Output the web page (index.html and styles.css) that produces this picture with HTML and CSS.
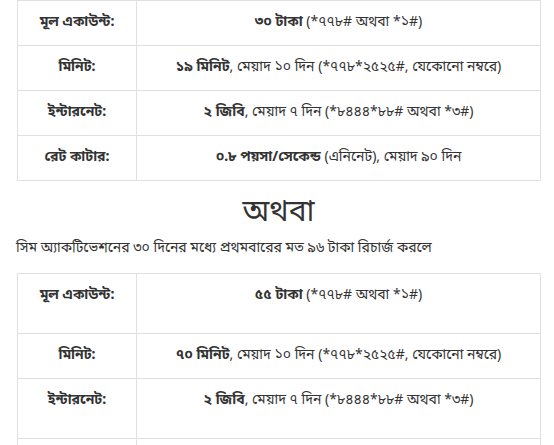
FILE: index.html
```html
<!DOCTYPE html>
<html lang="bn">
<head>
<meta charset="utf-8">
<link rel="stylesheet" href="styles.css">
</head>
<body>
<div class="page">
  <table class="plan">
    <tr>
      <th class="label">মূল একাউন্ট:</th>
      <td class="value"><b>৩০ টাকা</b> (*৭৭৮# অথবা *১#)</td>
    </tr>
    <tr>
      <th class="label">মিনিট:</th>
      <td class="value"><b>১৯ মিনিট</b>, মেয়াদ ১০ দিন (*৭৭৮*২৫২৫#, যেকোনো নম্বরে)</td>
    </tr>
    <tr>
      <th class="label">ইন্টারনেট:</th>
      <td class="value"><b>২ জিবি</b>, মেয়াদ ৭ দিন (*৮৪৪৪*৮৮# অথবা *৩#)</td>
    </tr>
    <tr>
      <th class="label">রেট কাটার:</th>
      <td class="value"><b>০.৮ পয়সা/সেকেন্ড</b> (এনিনেট), মেয়াদ ৯০ দিন</td>
    </tr>
  </table>

  <h2 class="or">অথবা</h2>
  <p class="note">সিম অ্যাকটিভেশনের ৩০ দিনের মধ্যে প্রথমবারের মত ৯৬ টাকা রিচার্জ করলে</p>

  <table class="plan">
    <tr class="tall">
      <th class="label">মূল একাউন্ট:</th>
      <td class="value"><b>৫৫ টাকা</b> (*৭৭৮# অথবা *১#)</td>
    </tr>
    <tr>
      <th class="label">মিনিট:</th>
      <td class="value"><b>৭০ মিনিট</b>, মেয়াদ ১০ দিন (*৭৭৮*২৫২৫#, যেকোনো নম্বরে)</td>
    </tr>
    <tr class="tall">
      <th class="label">ইন্টারনেট:</th>
      <td class="value"><b>২ জিবি</b>, মেয়াদ ৭ দিন (*৮৪৪৪*৮৮# অথবা *৩#)</td>
    </tr>
    <tr>
      <th class="label">রেট কাটার:</th>
      <td class="value"><b>০.৮ পয়সা/সেকেন্ড</b> (এনিনেট), মেয়াদ ৯০ দিন</td>
    </tr>
  </table>
</div>
</body>
</html>
```

FILE: styles.css
```css
html, body {
  margin: 0;
  padding: 0;
  background: #ffffff;
}

body {
  font-family: "Noto Sans Bengali", "Lohit Bengali", "Noto Sans", "DejaVu Sans", sans-serif;
  color: #333333;
  font-size: 14px;
}

.page {
  padding: 0 13px 0 16px;
}

.plan {
  width: 524px;
  margin-left: 1px;
  border-collapse: collapse;
  border: 1px solid #e0e0e0;
}

.plan th,
.plan td {
  border: 1px solid #e0e0e0;
  text-align: center;
  vertical-align: top;
  padding: 11px 8px 0;
  height: 33px;
  line-height: 22px;
  box-sizing: border-box;
}

.plan tr {
  height: 45px;
}

.plan .label {
  width: 119px;
  font-weight: bold;
}

.plan .value b {
  font-weight: bold;
}

.plan tr.tall {
  height: 60px;
}

.or {
  margin: 12px 0 0;
  text-align: center;
  font-weight: normal;
  font-size: 30px;
  line-height: 40px;
}

.note {
  margin: 5px 0 13px;
  line-height: 22px;
}
```
